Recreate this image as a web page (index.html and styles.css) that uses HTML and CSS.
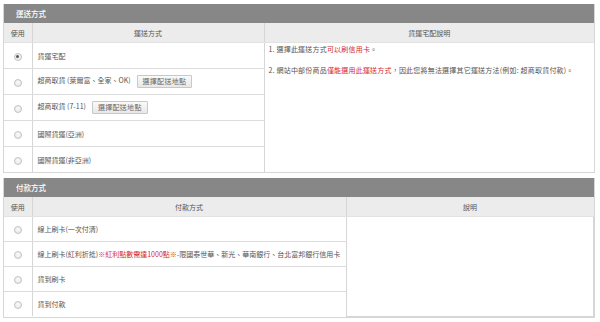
FILE: index.html
```html
<!DOCTYPE html>
<html lang="zh-Hant">
<head>
<meta charset="utf-8">
<link rel="stylesheet" href="styles.css">
</head>
<body>
<div class="page">
  <section class="panel">
    <div class="panel-title">運送方式</div>
    <table class="grid ship">
      <colgroup><col class="c-use"><col class="c-ship"><col></colgroup>
      <thead>
        <tr><th>使用</th><th>運送方式</th><th>貨運宅配說明</th></tr>
      </thead>
      <tbody>
        <tr>
          <td class="use"><span class="radio checked"></span></td>
          <td class="name">貨運宅配</td>
          <td class="notes" rowspan="5">
            <p>1. 選擇此運送方式<span class="red">可以刷信用卡</span>。</p>
            <p>2. 網站中部份商品<span class="red">僅能選用此運送方式</span>，因此您將無法選擇其它運送方法(例如: 超商取貨付款)。</p>
          </td>
        </tr>
        <tr>
          <td class="use"><span class="radio"></span></td>
          <td class="name">超商取貨 (萊爾富、全家、OK)<span class="btn">選擇配送地點</span></td>
        </tr>
        <tr>
          <td class="use"><span class="radio"></span></td>
          <td class="name">超商取貨 (7-11)<span class="btn">選擇配送地點</span></td>
        </tr>
        <tr>
          <td class="use"><span class="radio"></span></td>
          <td class="name">國際貨運(亞洲)</td>
        </tr>
        <tr>
          <td class="use"><span class="radio"></span></td>
          <td class="name">國際貨運(非亞洲)</td>
        </tr>
      </tbody>
    </table>
  </section>

  <section class="panel pay-panel">
    <div class="panel-title">付款方式</div>
    <table class="grid pay">
      <colgroup><col class="c-use"><col class="c-pay"><col></colgroup>
      <thead>
        <tr><th>使用</th><th>付款方式</th><th>說明</th></tr>
      </thead>
      <tbody>
        <tr>
          <td class="use"><span class="radio"></span></td>
          <td class="name">線上刷卡(一次付清)</td>
          <td class="notes" rowspan="4"></td>
        </tr>
        <tr>
          <td class="use"><span class="radio"></span></td>
          <td class="name">線上刷卡(紅利折抵)<span class="red">※紅利點數需達1000點※</span>-限國泰世華、新光、華南銀行、台北富邦銀行信用卡</td>
        </tr>
        <tr>
          <td class="use"><span class="radio"></span></td>
          <td class="name">貨到刷卡</td>
        </tr>
        <tr>
          <td class="use"><span class="radio"></span></td>
          <td class="name">貨到付款</td>
        </tr>
      </tbody>
    </table>
  </section>
</div>
</body>
</html>
```

FILE: styles.css
```css
html, body {
  margin: 0;
  padding: 0;
  background: #fff;
}

body {
  font-family: "Noto Sans CJK TC", "Noto Sans", sans-serif;
  font-size: 7px;
  color: #555;
}

.page {
  padding: 4px 5px 0 3px;
  display: flex;
  flex-direction: column;
  gap: 5px;
}

.panel {
  border: 1px solid #d6d6d6;
  border-top: none;
}

.panel-title {
  background: #878787;
  color: #fff;
  height: 19px;
  line-height: 19px;
  padding-left: 12px;
  font-size: 7.5px;
  font-weight: 500;
}

.grid {
  width: 100%;
  border-collapse: collapse;
  table-layout: fixed;
}

.c-use { width: 28px; }
.c-ship { width: 232px; }
.c-pay { width: 314px; }

.grid th {
  background: #ececec;
  font-weight: 400;
  height: 19px;
  padding: 0;
  text-align: center;
  color: #555;
  border-left: 1px solid #d6d6d6;
  border-bottom: 1px solid #e2e2e2;
}

.grid th:first-child {
  border-left: none;
}

.grid td {
  padding: 0;
  border-left: 1px solid #d6d6d6;
  border-bottom: 1px solid #dcdcdc;
  vertical-align: middle;
}

.grid td.use {
  border-left: none;
  text-align: center;
}

.ship td.use, .ship td.name { height: 25px; }
.pay td.use, .pay td.name { height: 24px; }

.grid tr:last-child td.use,
.grid tr:last-child td.name {
  border-bottom: none;
}

.grid td.name {
  padding-left: 5px;
  white-space: nowrap;
}

.grid td.notes {
  vertical-align: top;
  padding: 1px 4px 0;
  border-bottom: none;
  background: #fff;
}

.pay td.notes {
  border-bottom: 1px solid #d6d6d6;
  border-right: 1px solid #d6d6d6;
}

.notes p {
  margin: 0;
  line-height: 11px;
  padding: 0;
  letter-spacing: 0.2px;
  white-space: nowrap;
}

.notes p + p {
  margin-top: 10px;
}

.red {
  color: #d42a30;
}

.radio {
  display: inline-block;
  width: 6px;
  height: 6px;
  border: 1px solid #c4c4c4;
  border-radius: 50%;
  background: radial-gradient(circle at 50% 40%, #fafafa, #e4e4e4);
  vertical-align: middle;
  position: relative;
}

.radio.checked::after {
  content: "";
  position: absolute;
  left: 1.5px;
  top: 1.5px;
  width: 3px;
  height: 3px;
  border-radius: 50%;
  background: #555;
}

.btn {
  display: inline-block;
  margin-left: 6px;
  height: 11px;
  line-height: 11px;
  padding: 0 5px;
  border: 1px solid #c8c8c8;
  border-radius: 1px;
  background: linear-gradient(#fafafa, #e8e8e8);
  color: #666;
  vertical-align: middle;
  letter-spacing: 0.3px;
}
```
